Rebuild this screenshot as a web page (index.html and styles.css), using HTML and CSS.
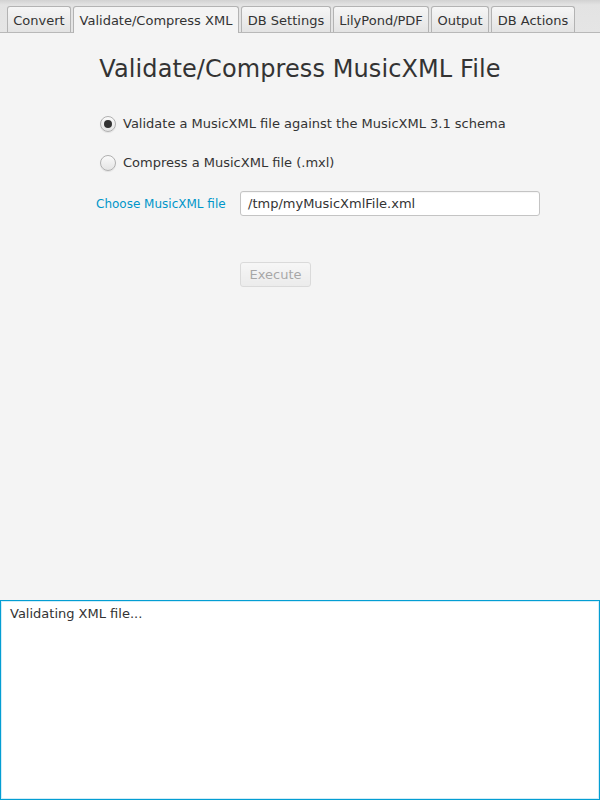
FILE: index.html
```html
<!DOCTYPE html>
<html>
<head>
<meta charset="utf-8">
<link rel="stylesheet" href="styles.css">
</head>
<body>
<div class="app">
  <div class="tabbar">
    <div class="tab w-convert">Convert</div>
    <div class="tab sel w-validate">Validate/Compress XML</div>
    <div class="tab w-db">DB Settings</div>
    <div class="tab w-lily">LilyPond/PDF</div>
    <div class="tab w-output">Output</div>
    <div class="tab w-actions">DB Actions</div>
  </div>
  <div class="main">
    <h1 class="title">Validate/Compress MusicXML File</h1>
    <div class="options">
      <div class="radio-row"><span class="radio on"><span class="dot"></span></span><span>Validate a MusicXML file against the MusicXML 3.1 schema</span></div>
      <div class="radio-row second"><span class="radio"></span><span>Compress a MusicXML file (.mxl)</span></div>
    </div>
    <div class="file-row">
      <span class="link">Choose MusicXML file</span>
      <div class="field">/tmp/myMusicXmlFile.xml</div>
    </div>
    <div class="exec-row">
      <div class="btn disabled">Execute</div>
    </div>
  </div>
  <div class="output">Validating XML file...</div>
</div>
</body>
</html>
```
FILE: styles.css
```css
html, body {
  margin: 0;
  padding: 0;
}
body {
  background: #f4f4f4;
  font-family: "DejaVu Sans", Verdana, sans-serif;
  font-size: 13px;
  color: #333333;
}
.app {
  width: 600px;
  height: 800px;
  display: flex;
  flex-direction: column;
}
.tabbar {
  height: 33px;
  box-sizing: border-box;
  padding: 6px 0 0 7px;
  display: flex;
  gap: 2px;
  align-items: flex-start;
  border-bottom: 1px solid #b8b8b8;
  background: linear-gradient(to bottom, #d2d2d2 0px, #e3e3e3 5px, #e5e5e5 100%);
}
.tab {
  height: 26px;
  box-sizing: border-box;
  border: 1px solid #b3b3b3;
  border-bottom: none;
  border-radius: 3px 3px 0 0;
  padding: 3px 0 0;
  line-height: 22px;
  text-align: center;
  white-space: nowrap;
  background: linear-gradient(to bottom, #f6f6f6, #e3e3e3);
}
.w-convert { width: 64px; }
.w-validate { width: 166px; }
.w-db { width: 90px; }
.w-lily { width: 96px; }
.w-output { width: 58px; }
.w-actions { width: 84px; }
.tab.sel {
  height: 27px;
  margin-bottom: -1px;
  background: #f4f4f4;
}
.main {
  flex: 1;
  display: flex;
  flex-direction: column;
}
.title {
  margin: 22px 0 0;
  font-size: 24px;
  line-height: 28px;
  letter-spacing: 0.1px;
  font-weight: normal;
  text-align: center;
  color: #333333;
}
.options {
  margin: 33px 0 0 100px;
  display: flex;
  flex-direction: column;
  gap: 23px;
}
.radio-row {
  display: flex;
  align-items: center;
  gap: 7px;
  height: 16px;
  line-height: 16px;
}
.radio {
  width: 16px;
  height: 16px;
  box-sizing: border-box;
  border-radius: 50%;
  border: 1px solid #b0b0b0;
  background: linear-gradient(to bottom, #fafafa, #e4e4e4);
  display: flex;
  align-items: center;
  justify-content: center;
  box-shadow: 0 1px 1px rgba(0,0,0,0.08);
}
.dot {
  width: 8px;
  height: 8px;
  border-radius: 50%;
  background: #333333;
}
.file-row {
  margin: 20px 0 0 96px;
  display: flex;
  align-items: center;
}
.link {
  width: 144px;
  font-size: 12px;
  line-height: 14px;
  color: #0096c9;
  padding-top: 1px;
}
.field {
  width: 300px;
  height: 25px;
  box-sizing: border-box;
  border: 1px solid #c4c4c4;
  border-radius: 3px;
  background: #ffffff;
  padding: 0 7px;
  line-height: 23px;
  box-shadow: inset 0 1px 1px rgba(0,0,0,0.04);
}
.exec-row {
  margin: 46px 0 0 240px;
  display: flex;
}
.btn {
  width: 71px;
  height: 25px;
  box-sizing: border-box;
  border: 1px solid #b5b5b5;
  border-radius: 3px;
  background: linear-gradient(to bottom, #fbfbfb, #e0e0e0);
  text-align: center;
  line-height: 23px;
}
.btn.disabled {
  opacity: 0.4;
}
.output {
  height: 200px;
  box-sizing: border-box;
  border: 1px solid #039ed3;
  box-shadow: inset 0 0 0 1px #d2edf8;
  background: #ffffff;
  padding: 5px 9px;
  line-height: 16px;
}
```
